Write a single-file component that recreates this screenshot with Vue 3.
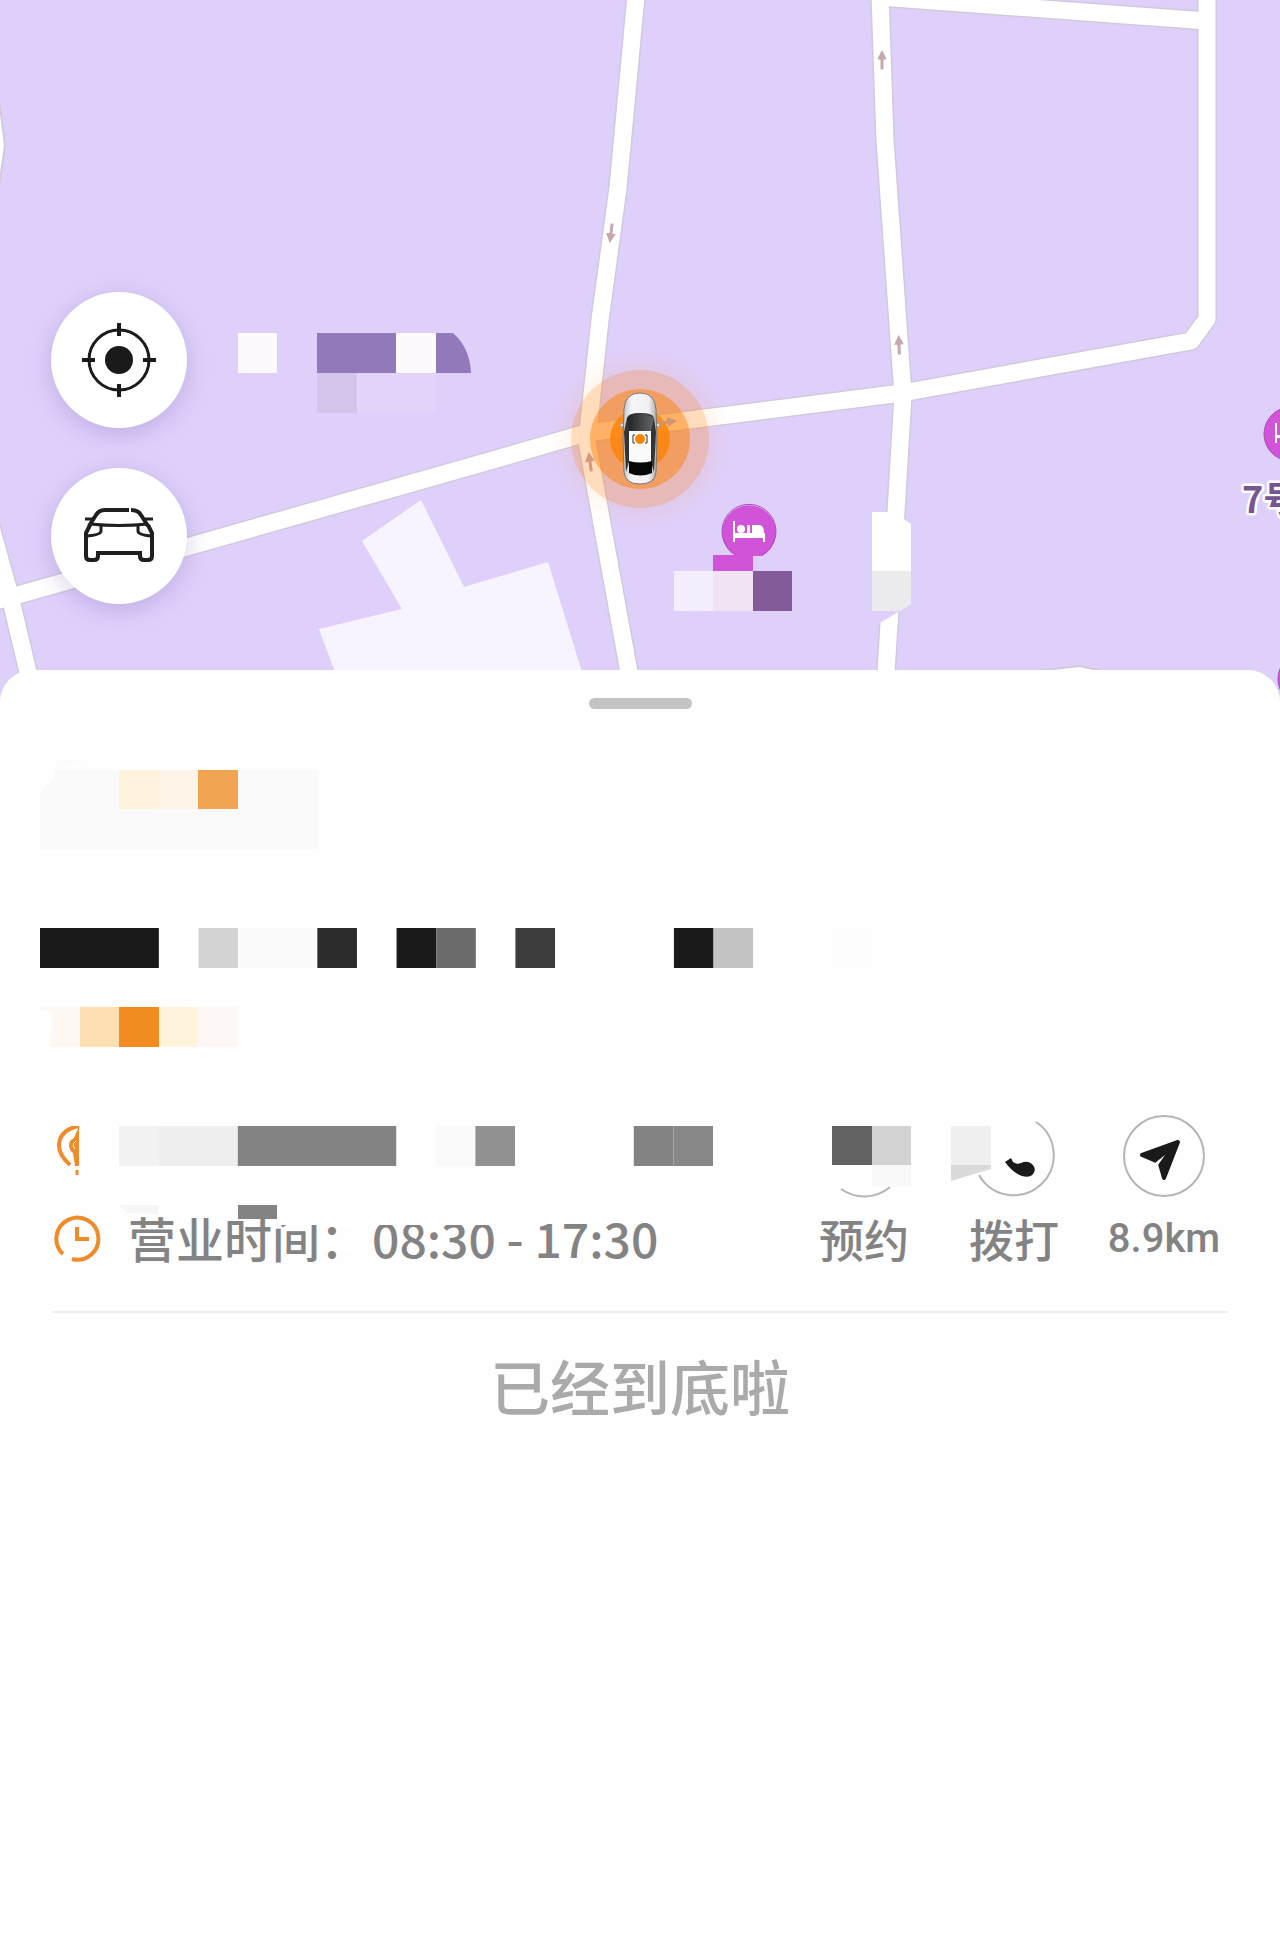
<script setup>
import { ref } from "vue";

const roads = [
  "M636 -4L618 188L600 320L587 441L629 672",
  "M-12 603L18 595L500 458L586 433L902 393L1191 341L1207 319V-10",
  "M880 -6L885 140L903 395L896 512L886 672",
  "M880 -3L1207 21",
  "M-11 520L9 592L28 672",
];

const arrows = [
  { x: 611, y: 233, angle: 187 },
  { x: 882, y: 60, angle: 0 },
  { x: 899, y: 345, angle: -2 },
  { x: 590, y: 462, angle: -8 },
  { x: 667, y: 422, angle: 82 },
];

// every cell is [column, color, span]
const nameCells = [
  [0, "#1a1a1a", 3],
  [4, "#d3d3d3", 1],
  [5, "#fbfbfb", 2],
  [7, "#2c2c2c", 1],
  [9, "#1a1a1a", 1],
  [10, "#6c6c6c", 1],
  [12, "#3d3d3d", 1],
  [16, "#1a1a1a", 1],
  [17, "#c4c4c4", 1],
  [20, "#fdfdfd", 1],
];
const addressCells = [
  [0, "#f2f2f2", 1],
  [1, "#eeeeee", 2],
  [3, "#838383", 4],
  [8, "#fafafa", 1],
  [9, "#919191", 1],
  [13, "#838383", 1],
  [14, "#888888", 1],
];

const hours = ref("08:30 - 17:30");
const distance = ref("8.9km");
</script>

<template>
  <main class="page">
    <section class="map">
      <svg class="map-canvas" viewBox="0 0 1280 700" preserveAspectRatio="xMidYMin slice">
        <defs>
          <linearGradient id="glass" x1="0" x2="1">
            <stop offset="0" stop-color="#202124" />
            <stop offset="1" stop-color="#66676b" />
          </linearGradient>
          <linearGradient id="body" x1="0" x2="1">
            <stop offset="0" stop-color="#bfc0c3" />
            <stop offset="0.25" stop-color="#f6f6f8" />
            <stop offset="0.75" stop-color="#f1f1f4" />
            <stop offset="1" stop-color="#a9aaad" />
          </linearGradient>
          <radialGradient id="halo">
            <stop offset="0.7" stop-color="#ff7f00" stop-opacity="0.08" />
            <stop offset="1" stop-color="#ff7f00" stop-opacity="0" />
          </radialGradient>
        </defs>

        <path d="M421 500L464 587L548 562L582 672H335L319 629L402 609L362 541Z" fill="#f7f4ff" />
        <g fill="none" stroke-linejoin="round">
          <path v-for="d in roads" :key="'c' + d" :d="d" stroke="#d2c9dc" stroke-width="20" />
          <path d="M-2 92L5 145L-2 194" fill="#fff" stroke="#d2c9dc" stroke-width="2" />
          <path d="M1035 671L1080 666L1102 671Z" fill="#fff" stroke="#d2c9dc" stroke-width="2" />
          <path v-for="d in roads" :key="d" :d="d" stroke="#fff" stroke-width="17" />
        </g>

        <g fill="#9279ba">
          <path d="M238 333h39v40h-39z" fill="#fef9ff" />
          <path d="M317 333h79v40h-79z" />
          <path d="M396 333h40v40h-40z" fill="#fcf9ff" />
          <path d="M436 333h17q17 15 18 40h-35z" />
          <path d="M317 373h40v40h-40z" fill="#d4c5ec" />
          <path d="M357 373h79v40h-79z" fill="#e2d3fb" />
        </g>

        <g fill="#ff7f00">
          <circle cx="640" cy="439" r="92" fill="url(#halo)" />
          <circle cx="640" cy="439" r="69" opacity="0.2" />
          <circle cx="640" cy="439" r="50" opacity="0.46" />
          <circle cx="640" cy="439" r="30" opacity="0.75" />
        </g>

        <path
          v-for="a in arrows"
          :key="a.x"
          d="M0 -9L4 -1H1V9H-1V-1H-4Z"
          :transform="`translate(${a.x} ${a.y}) rotate(${a.angle})`"
          :fill="a.y > 400 ? '#cf9274' : '#c19ea3'"
          :stroke="a.y > 400 ? '#cf9274' : '#c19ea3'"
          opacity="0.9"
        />

        <g>
          <path d="M624 422l-4 3v2l5 -1M656 422l4 3v2l-5 -1" fill="#eee" stroke="#999" />
          <path
            d="M624 409Q625 393 640 393Q655 393 656 409L657 440L656 472Q655 484 640 484Q625 484 624 472L623 440Z"
            fill="url(#body)"
            stroke="#77777a"
          />
          <path
            d="M627 418Q628 413 640 413Q653 413 654 418L656 432L654 472L651 462V433H629V462L626 472L624 432Z"
            fill="#333436"
          />
          <path d="M627 418Q640 409 654 418L651 431H630Z" fill="url(#glass)" />
          <path d="M629 431h22v31h-22z" fill="#fafafa" />
          <path d="M629 461Q640 464 652 461V473Q640 478 629 473Z" fill="#080808" />
          <path d="M635 435h-2v8h2M645 435h2v8h-2" fill="none" stroke="#333" />
          <circle cx="640" cy="439" r="5" fill="#ff8500" />
        </g>

        <path d="M736 556A27 27 0 1 1 762 556Z" fill="#d053d8" />
        <path d="M736 555A27 27 0 1 1 762 555" fill="none" stroke="#a94fb5" />
        <g fill="#fff">
          <path d="M733 521h2v12h30v9h-2v-4h-28v4h-2z" />
          <circle cx="741" cy="529" r="4" />
          <path d="M747 525h3v8h-3zM752 525h8q4 1 4 8h-12z" />
        </g>
        <path d="M713 555h40v16h-40z" fill="#d053d8" />
        <path d="M674 571h39v40h-39z" fill="#f4edfd" />
        <path d="M713 571h40v40h-40z" fill="#efe3f4" />
        <path d="M753 571h39v40h-39z" fill="#825b98" />

        <path d="M872 512h32v7l7 5v47h-39z" fill="#fff" />
        <path d="M872 571h39v33l-10 7h-29z" fill="#ebebed" />
        <path d="M878 611h24l-24 13z" fill="#dfd0fb" />
        <path d="M880 623l18 -11v12z" fill="#fff" />

        <circle cx="1291" cy="434" r="27" fill="#d053d8" stroke="#a94fb5" />
        <path d="M1275 423h2v12h8v3h-8v5h-2z" fill="#fff" />
        <circle cx="1305" cy="679" r="27" fill="#d053d8" stroke="#a94fb5" />
        <text class="poi" x="1242" y="513">7号</text>
      </svg>

      <div class="controls">
        <button type="button" class="round" aria-label="定位">
          <svg width="76" height="76" viewBox="0 0 76 76" fill="none" stroke="#1a1a1a" stroke-width="3">
            <circle cx="38" cy="38" r="30" />
            <circle cx="38" cy="38" r="14" fill="#1a1a1a" stroke="none" />
            <path d="M38 1V14M38 62V75M1 38H14M62 38H75" stroke-width="4" />
          </svg>
        </button>
        <button type="button" class="round" aria-label="车辆">
          <svg width="76" height="76" viewBox="0 0 76 76" fill="none" stroke="#1f1f1f" stroke-width="4">
            <path d="M48 12H24Q18 12 15 17L8 28M50 12Q57 12 60 17L67 28" />
            <path d="M4 21H12M64 21H72M9 26Q38 29 67 26" stroke-width="3" />
            <path d="M9 27L5 35V58Q5 62 9 62H13Q17 62 17 58V55H59V58Q59 62 63 62H67Q71 62 71 58V35L67 27" />
            <path d="M20 28V33Q20 37 5 38M57 28V33Q57 37 71 38" stroke-width="3" />
          </svg>
        </button>
      </div>
    </section>

    <section class="sheet">
      <div class="handle"></div>

      <div class="redacted">
        <svg width="278" height="89" viewBox="0 0 278 89">
          <path d="M14 10H278V89H0V33L14 17Z" fill="#fafafa" />
          <path d="M16 3L22 0H48L26 7L16 10Z" fill="#fcfcfc" />
          <path d="M79 10h40v39h-40z" fill="#fff3dd" />
          <path d="M119 10h39v39h-39z" fill="#fff4e7" />
          <path d="M158 10h40v39h-40z" fill="#f1a451" />
        </svg>
        <svg width="832" height="40" viewBox="0 0 21 1" preserveAspectRatio="none">
          <rect v-for="[col, color, span] in nameCells" :key="col" :x="col" y="0" :width="span" height="1" :fill="color" />
        </svg>
        <svg width="198" height="40" viewBox="0 0 198 40">
          <path d="M0 0H40V40H10L13 5L0 4Z" fill="#fdf8f4" />
          <path d="M40 0h39v40h-39z" fill="#fedfb1" />
          <path d="M79 0h40v40h-40z" fill="#f18c20" />
          <path d="M119 0h39v40h-39z" fill="#fff3db" />
          <path d="M158 0h40v40h-40z" fill="#fdf8f5" />
        </svg>
      </div>

      <article class="store">
        <div class="info">
          <div class="row address">
            <svg class="icon" width="52" height="52" viewBox="0 0 52 52" fill="none" stroke="#ef8c2a" stroke-width="4">
              <path d="M27 0Q7 4 7 20Q7 29 18 39" />
              <path d="M27 0V40H23L21 27Q17 24 17 19Q17 14 22 12Z" fill="#ef8c2a" stroke="none" />
              <path d="M24 15Q21 17 21 20L23 23" stroke="#fff" stroke-width="1" />
              <path d="M25 44V49" stroke-width="3" />
            </svg>
            <svg class="mosaic" width="594" height="40" viewBox="0 0 15 1" preserveAspectRatio="none">
              <rect v-for="[col, color, span] in addressCells" :key="col" :x="col" y="0" :width="span" height="1" :fill="color" />
            </svg>
          </div>
          <div class="row">
            <svg class="icon" width="52" height="52" viewBox="0 0 52 52" fill="none" stroke="#ef8c2a" stroke-width="4">
              <path d="M11 41A21 21 0 1 1 20 46" />
              <path d="M25 14V26H37" />
            </svg>
            <p class="hours">
              <span>营业时间：</span>
              <span>{{ hours }}</span>
            </p>
            <svg class="cover" width="400" height="24" viewBox="0 0 400 24">
              <path d="M158 0H376V20H158Z" fill="#fefefe" />
              <path d="M0 0H39V9L8 8Z" fill="#f6f6f6" />
              <path d="M119 0H158V14H119Z" fill="#838383" />
            </svg>
          </div>
        </div>

        <div class="actions">
          <button type="button" class="action">
            <svg width="82" height="82" viewBox="0 0 82 82">
              <path d="M18 74A40 40 0 0 0 67 72" fill="none" stroke="#b5b5b5" stroke-width="2" />
              <path d="M9 11h40v39h-40z" fill="#636363" />
              <path d="M49 11h39v39h-39z" fill="#d2d2d2" />
              <path d="M49 50h39v22h-39z" fill="#f9f9f9" />
            </svg>
            <span>预约</span>
          </button>
          <button type="button" class="action">
            <svg width="82" height="82" viewBox="0 0 82 82">
              <path d="M63 7A40 40 0 1 1 6 60" fill="none" stroke="#b5b5b5" stroke-width="2" />
              <path d="M-22 11h40v39h-40z" fill="#efefef" />
              <path d="M-22 50h40v4l-40 12z" fill="#dadada" />
              <path d="M32 47L38 43L40 47Q44 50 48 48Q54 45 59 49Q64 54 60 59Q57 63 49 61Q40 58 32 47Z" fill="#1a1a1a" />
            </svg>
            <span>拨打</span>
          </button>
          <button type="button" class="action">
            <svg width="82" height="82" viewBox="0 0 82 82">
              <circle cx="41" cy="41" r="40" fill="none" stroke="#b5b5b5" stroke-width="2" />
              <path
                d="M55 27L19 40L33 46L44 39L37 49L41 63Z"
                fill="#1a1a1a"
                stroke="#1a1a1a"
                stroke-width="4"
                stroke-linejoin="round"
              />
              <path d="M32 48L42 40L35 50Z" fill="#fff" />
            </svg>
            <span class="distance">{{ distance }}</span>
          </button>
        </div>
      </article>

      <p class="end">已经到底啦</p>
    </section>
  </main>
</template>

<style>
body {
  margin: 0;
  background: #fefefe;
}
</style>

<style scoped>
.page {
  min-height: 100vh;
  background: #fefefe;
  font-family: "Noto Sans CJK SC", sans-serif;
  font-weight: 500;
  color: #838383;
  overflow: hidden;
}

.map {
  position: relative;
  height: 700px;
  background: #dfd0fb;
}

.map-canvas {
  display: block;
  width: 100%;
  height: 100%;
}

.poi {
  font-size: 36px;
  font-weight: 700;
  fill: #77568f;
  stroke: #fff;
  stroke-width: 5px;
  stroke-linejoin: round;
  paint-order: stroke;
}

/* floating over the map */
.controls {
  position: absolute;
  top: 292px;
  left: 51px;
  display: flex;
  flex-direction: column;
  gap: 40px;
}

.round {
  display: flex;
  align-items: center;
  justify-content: center;
  width: 136px;
  height: 136px;
  padding: 0;
  border: none;
  border-radius: 50%;
  background: #fff;
  box-shadow: 0 6px 24px rgba(80, 50, 150, 0.22);
}

.sheet {
  position: relative;
  margin-top: -30px;
  padding-top: 28px;
  border-radius: 32px 32px 0 0;
  background: #fefefe;
}

.handle {
  width: 103px;
  height: 11px;
  margin: 0 auto;
  border-radius: 6px;
  background: #c4c4c4;
}

.redacted {
  display: flex;
  flex-direction: column;
  padding: 51px 40px 0;
}

.redacted svg:nth-child(2) {
  margin: 79px 0 39px;
}

.store {
  display: flex;
  justify-content: space-between;
  margin: 68px 52px 0;
  padding-bottom: 42px;
  border-bottom: 2px solid #eeeeee;
}

.info {
  display: flex;
  flex-direction: column;
  gap: 43px;
  padding-top: 11px;
}

.row {
  position: relative;
  display: flex;
  align-items: center;
  height: 60px;
}

.address {
  align-items: flex-start;
  height: 40px;
}

.icon {
  flex: none;
}

.mosaic {
  margin-left: 15px;
}

.hours {
  display: flex;
  gap: 4px;
  margin: 0 0 0 24px;
  padding-bottom: 4px;
  font-size: 48px;
  line-height: 56px;
  white-space: nowrap;
}

.cover {
  position: absolute;
  top: -4px;
  left: 67px;
}

.actions {
  display: flex;
  gap: 22px;
}

.action {
  display: flex;
  flex-direction: column;
  align-items: center;
  gap: 14px;
  width: 128px;
  padding: 0;
  border: none;
  background: none;
  color: inherit;
  font-family: inherit;
  font-size: 45px;
  font-weight: inherit;
  line-height: 56px;
}

.action svg {
  overflow: visible;
}

.distance {
  font-family: Roboto, sans-serif;
  font-size: 40px;
}

.end {
  margin: 32px 0;
  font-size: 60px;
  line-height: 80px;
  text-align: center;
  color: #aaaaaa;
}
</style>
